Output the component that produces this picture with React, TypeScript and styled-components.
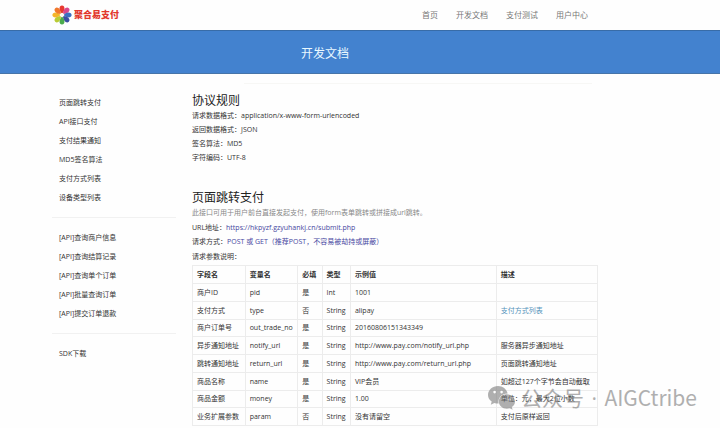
import React from "react";
import styled, { createGlobalStyle } from "styled-components";

const GlobalStyle = createGlobalStyle`
  * { box-sizing: border-box; }
  body {
    margin: 0;
    background: #fefefe;
    color: #333;
    font: 7px/14px "Open Sans", "Noto Sans CJK SC", sans-serif;
  }
`;

const Page = styled.div`
  position: relative;
  min-height: 100vh;
  overflow: hidden;
`;

const Header = styled.header`
  display: flex;
  align-items: center;
  justify-content: space-between;
  height: 30px;
  padding: 0 132px 0 52px;
`;

const Brand = styled.a`
  display: flex;
  align-items: center;
  gap: 2px;
  color: #e2382c;
  font-size: 9px;
  font-weight: 900;
  text-decoration: none;
`;

const Nav = styled.nav`
  display: flex;
  gap: 18px;
`;

const NavLink = styled.a`
  color: #777;
  font-size: 8px;
  text-decoration: none;
`;

const Banner = styled.div`
  height: 44px;
  padding: 4px 70px 0 0;
  border-top: 1px solid #386ca8;
  border-bottom: 1px solid #4674a8;
  background: #4382cf;
  display: flex;
  align-items: center;
  justify-content: center;
`;

const BannerTitle = styled.h1`
  margin: 0;
  color: #e9f8ff;
  font-size: 12px;
  line-height: 16px;
  font-weight: 400;
`;

const BannerRule = styled.hr`
  margin: 9px 128px 0 244px;
  border: 0;
  border-top: 1px solid #f7f7f5;
`;

const Content = styled.div`
  display: grid;
  grid-template-columns: 124px minmax(0, 1fr);
  gap: 16px;
  padding: 9px 122px 0 52px;
`;

const Sidebar = styled.aside`
  display: flex;
  flex-direction: column;
`;

const SideList = styled.ul`
  margin: 0;
  padding: 0 7px;
  list-style: none;

  & + & {
    margin-top: 10px;
    padding-top: 10px;
    border-top: 1px solid #f1f1f1;
  }
`;

const SideItem = styled.li`
  height: 19px;
  line-height: 19px;
`;

const SideLink = styled.a`
  color: #333;
  text-decoration: none;
`;

const Section = styled.section`
  & + & {
    margin-top: 25px;
  }
`;

const Heading = styled.h2`
  margin: 0;
  font-size: 12px;
  line-height: 16px;
  font-weight: 400;
  color: #222;
`;

const Line = styled.p<{ $muted?: boolean; $tall?: boolean }>`
  margin: 0;
  line-height: ${({ $tall }) => ($tall ? 15 : 14)}px;
  color: ${({ $muted }) => ($muted ? "#888" : "#333")};
`;

const Value = styled.span`
  color: #4646a0;
`;

const Table = styled.table`
  width: 100%;
  margin-top: 1px;
  border-collapse: collapse;
  table-layout: fixed;
`;

const Col = styled.col<{ $share: number }>`
  width: ${({ $share }) => $share}%;
`;

const Row = styled.tr`
  height: 18px;

  &:nth-child(4n + 3) {
    height: 17px;
  }
`;

const HeadCell = styled.th`
  padding: 0 0 0 4px;
  border: 1px solid #ececec;
  text-align: left;
  font-weight: 700;
  white-space: nowrap;
`;

const Cell = styled.td`
  padding: 0 0 0 4px;
  border: 1px solid #ececec;
  white-space: nowrap;
`;

const TableLink = styled.a`
  color: #5593bb;
  text-decoration: none;
`;

const Watermark = styled.div`
  position: absolute;
  right: 23px;
  bottom: 17px;
  display: flex;
  align-items: center;
  gap: 6px;
  color: #7c7c7c;
  font-family: "Noto Sans CJK SC", sans-serif;
  font-size: 21px;
  line-height: 26px;
  opacity: 0.6;
  pointer-events: none;
`;

const Dot = styled.span`
  padding: 0 2px;
  font-family: "Open Sans", sans-serif;
`;

const petals = ["#e8392f", "#d8488c", "#3c6fc0", "#3b4fa4", "#4bab4e", "#b9cc35", "#f4b52a", "#f0782c"];

const Flower = () => (
  <svg width="20" height="20" viewBox="-10 -10 20 20" aria-hidden="true">
    {petals.map((color, i) => (
      <path
        key={color}
        d="M0-1.500C-3.400-4.500-3.200-9.600 0-9.600S3.400-4.500 0-1.500Z"
        fill={color}
        transform={`rotate(${i * 45})`}
      />
    ))}
    <circle r="2" fill="#fffaf0" />
  </svg>
);

const ChatBubbles = () => (
  <svg width="27" height="24" viewBox="0 0 27 24" fill="currentColor" aria-hidden="true">
    <path
      fillRule="evenodd"
      d="M10 0C4.500 0 0 3.900 0 8.900c0 2.800 1.400 5.100 3.700 6.700L2.800 18.800l3.500-1.900c1.200.4 2.400.6 3.700.6h.6C9.600 12.100 13.500 7.500 19.600 7.400 18.700 3.200 14.700 0 10 0ZM6.600 4.800a1.300 1.300 0 1 1 0 2.600 1.300 1.300 0 0 1 0-2.600Zm7 0a1.300 1.300 0 1 1 0 2.600 1.300 1.300 0 0 1 0-2.600Z"
    />
    <path
      fillRule="evenodd"
      d="M18.800 8.300c-4.500 0-8 3.200-8 7.200s3.500 7.200 8 7.200c1 0 2-.2 2.900-.5l2.900 1.600-.8-2.700c1.900-1.300 3.200-3.300 3.200-5.600 0-4-3.700-7.200-8.200-7.200Zm-2.600 3.900a1.100 1.100 0 1 1 0 2.200 1.100 1.100 0 0 1 0-2.200Zm5.400 0a1.100 1.100 0 1 1 0 2.200 1.100 1.100 0 0 1 0-2.200Z"
    />
  </svg>
);

const navItems = ["首页", "开发文档", "支付测试", "用户中心"];

const sideGroups = [
  ["页面跳转支付", "API接口支付", "支付结果通知", "MD5签名算法", "支付方式列表", "设备类型列表"],
  ["[API]查询商户信息", "[API]查询结算记录", "[API]查询单个订单", "[API]批量查询订单", "[API]提交订单退款"],
  ["SDK下载"],
];

const protocol = [
  "请求数据格式：application/x-www-form-urlencoded",
  "返回数据格式：JSON",
  "签名算法：MD5",
  "字符编码：UTF-8",
];

const shares = [13, 13, 6, 7, 36, 25];
const columns = ["字段名", "变量名", "必填", "类型", "示例值", "描述"];

const rows: { cells: string[]; note: string; link?: boolean }[] = [
  { cells: ["商户ID", "pid", "是", "Int", "1001"], note: "" },
  { cells: ["支付方式", "type", "否", "String", "alipay"], note: "支付方式列表", link: true },
  { cells: ["商户订单号", "out_trade_no", "是", "String", "20160806151343349"], note: "" },
  { cells: ["异步通知地址", "notify_url", "是", "String", "http://www.pay.com/notify_url.php"], note: "服务器异步通知地址" },
  { cells: ["跳转通知地址", "return_url", "是", "String", "http://www.pay.com/return_url.php"], note: "页面跳转通知地址" },
  { cells: ["商品名称", "name", "是", "String", "VIP会员"], note: "如超过127个字节会自动截取" },
  { cells: ["商品金额", "money", "是", "String", "1.00"], note: "单位：元，最大2位小数" },
  { cells: ["业务扩展参数", "param", "否", "String", "没有请留空"], note: "支付后原样返回" },
];

export default function App() {
  return (
    <Page lang="zh-CN">
      <GlobalStyle />
      <Header>
        <Brand href="#">
          <Flower />
          聚合易支付
        </Brand>
        <Nav>
          {navItems.map((item) => (
            <NavLink key={item} href="#">{item}</NavLink>
          ))}
        </Nav>
      </Header>
      <Banner>
        <BannerTitle>开发文档</BannerTitle>
      </Banner>
      <BannerRule />
      <Content>
        <Sidebar>
          {sideGroups.map((group) => (
            <SideList key={group[0]}>
              {group.map((item) => (
                <SideItem key={item}>
                  <SideLink href="#">{item}</SideLink>
                </SideItem>
              ))}
            </SideList>
          ))}
        </Sidebar>
        <main>
          <Section>
            <Heading>协议规则</Heading>
            {protocol.map((text) => (
              <Line key={text}>{text}</Line>
            ))}
          </Section>
          <Section>
            <Heading>页面跳转支付</Heading>
            <Line $muted>此接口可用于用户前台直接发起支付，使用form表单跳转或拼接成url跳转。</Line>
            <Line $tall>URL地址：<Value>https://hkpyzf.gzyuhankj.cn/submit.php</Value></Line>
            <Line>请求方式：<Value>POST 或 GET（推荐POST，不容易被劫持或屏蔽）</Value></Line>
            <Line $tall>请求参数说明：</Line>
            <Table>
              <colgroup>
                {shares.map((share, i) => (
                  <Col key={i} $share={share} />
                ))}
              </colgroup>
              <thead>
                <Row>
                  {columns.map((name) => (
                    <HeadCell key={name} scope="col">{name}</HeadCell>
                  ))}
                </Row>
              </thead>
              <tbody>
                {rows.map(({ cells, note, link }) => (
                  <Row key={cells[1]}>
                    {cells.map((cell, i) => (
                      <Cell key={i}>{cell}</Cell>
                    ))}
                    <Cell>{link ? <TableLink href="#">{note}</TableLink> : note}</Cell>
                  </Row>
                ))}
              </tbody>
            </Table>
          </Section>
        </main>
      </Content>
      <Watermark>
        <ChatBubbles />
        <span>公众号<Dot> · </Dot>AIGCtribe</span>
      </Watermark>
    </Page>
  );
}
